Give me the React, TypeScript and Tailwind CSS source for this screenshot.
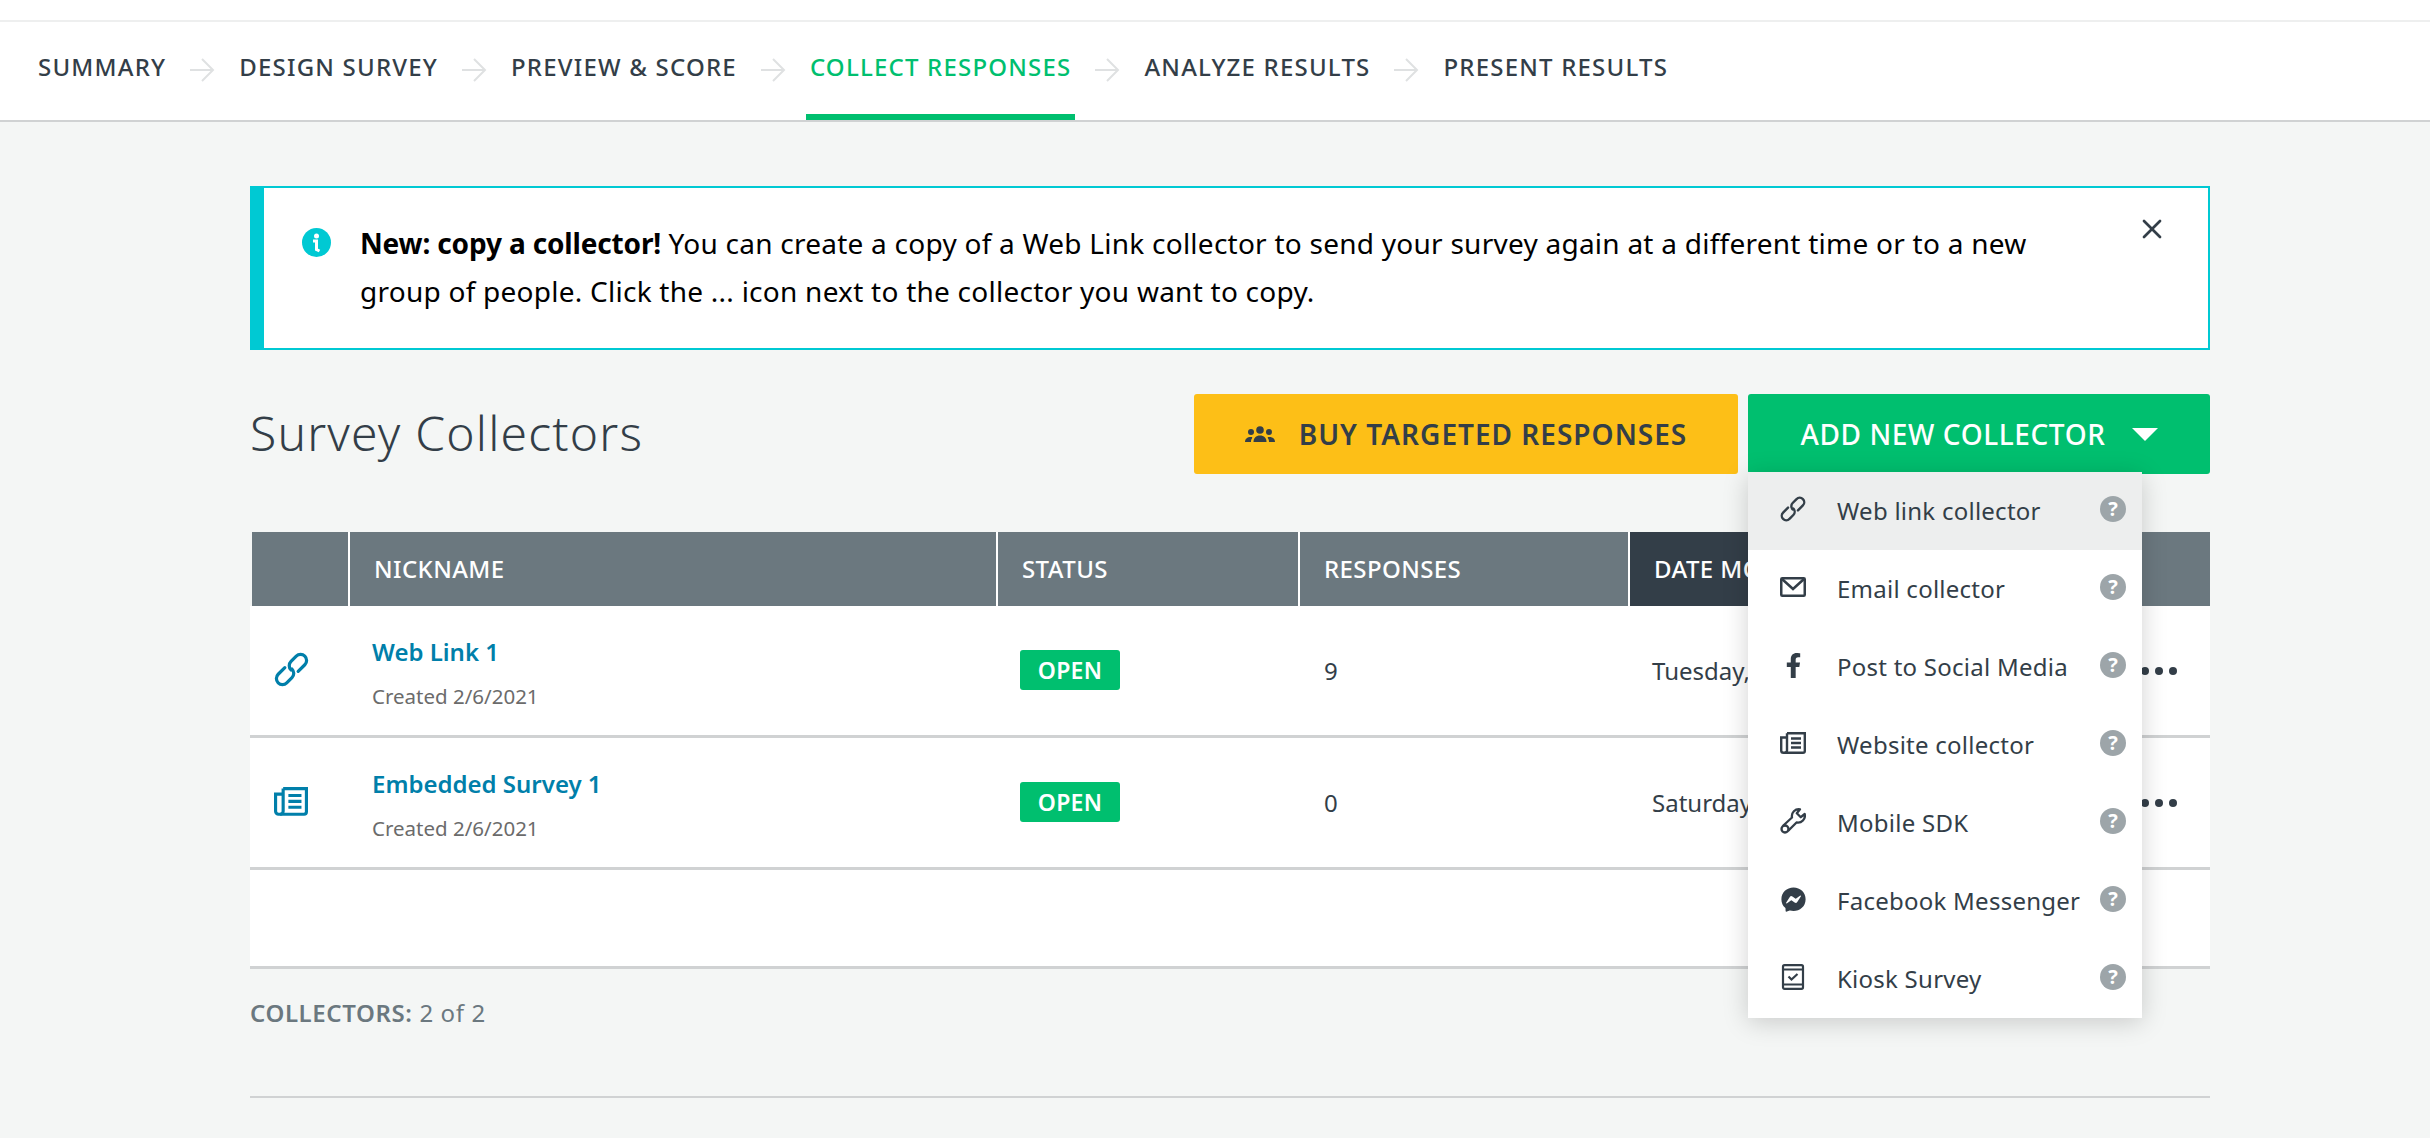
import React from "react";
import { FaFacebookF, FaFacebookMessenger } from "react-icons/fa";
import { X } from "lucide-react";

const steps = [
  { label: "SUMMARY", active: false },
  { label: "DESIGN SURVEY", active: false },
  { label: "PREVIEW & SCORE", active: false },
  { label: "COLLECT RESPONSES", active: true },
  { label: "ANALYZE RESULTS", active: false },
  { label: "PRESENT RESULTS", active: false },
];

const StepArrow = () => (
  <svg width="25" height="24" viewBox="0 0 25 24" fill="none" stroke="#dfe1e2" strokeWidth="2" className="mx-[20px] shrink-0">
    <path d="M0 12h23" />
    <path d="M12 1l11 11-11 11" />
  </svg>
);

const LinkIcon = ({ size = 26 }: { size?: number }) => (
  <svg width={size} height={size} viewBox="0 0 26 26" fill="none" stroke="currentColor" strokeWidth="2.4" strokeLinecap="round">
    <g transform="rotate(-45 13 13)">
      <path d="M10.500 8.500H3.500a4.500 4.500 0 0 0 0 9H9a4.500 4.500 0 0 0 4.500-4.500" />
      <path d="M15.500 17.500h7a4.500 4.500 0 0 0 0-9H17a4.500 4.500 0 0 0-4.500 4.500" />
    </g>
  </svg>
);

const NewsIcon = ({ width = 26 }: { width?: number }) => (
  <svg width={width} height={(width * 22) / 26} viewBox="0 0 26 22" fill="none" stroke="currentColor" strokeWidth="2.4">
    <path d="M7 1.200h17.800V19a1.800 1.800 0 0 1-1.800 1.800H3.500a2.300 2.300 0 0 1-2.300-2.300V5.500H7" />
    <path d="M7 1.200v17.300a2.300 2.300 0 0 1-2.300 2.300" />
    <path d="M11 6.500h10M11 11h10M11 15.500h10" />
  </svg>
);

const WrenchIcon = () => (
  <svg width="26" height="26" viewBox="0 0 26 26" fill="none" stroke="currentColor" strokeWidth="2.300" strokeLinejoin="round">
    <circle cx="5" cy="21" r="3.500" />
    <path d="M2.800 18L12 9.500A7 7 0 0 1 20 1.300L16.800 5.200L20.800 9.200L24.700 6A7 7 0 0 1 16.500 14.500L8 23" />
  </svg>
);

const MailIcon = () => (
  <svg width="26" height="20" viewBox="0 0 26 20" fill="none" stroke="currentColor" strokeWidth="2.500">
    <rect x="1.250" y="1.250" width="23.500" height="17.500" rx="1" />
    <path d="M2 2l11 10L24 2" />
  </svg>
);

const KioskIcon = () => (
  <svg width="24" height="26" viewBox="0 0 24 26" fill="none" stroke="currentColor" strokeWidth="2.200">
    <rect x="2" y="1.200" width="20" height="23.600" rx="1.500" />
    <path d="M2 5.500h20M2 20.500h20" />
    <path d="M7.500 12.500l3 3 6-5.500" />
  </svg>
);

const GroupIcon = () => (
  <svg width="30" height="16" viewBox="0 0 30 16" fill="#333e48">
    <circle cx="15" cy="4" r="3.800" />
    <circle cx="6" cy="6" r="3" />
    <circle cx="24" cy="6" r="3" />
    <path d="M8.500 16c0-4 2.500-6.500 6.500-6.500s6.500 2.500 6.500 6.500z" />
    <path d="M0 16c0-3 2-5 6-5 1.500 0 1.500.5 1 1.500-.8 1-1 2-1 3.500z" />
    <path d="M30 16c0-3-2-5-6-5-1.500 0-1.500.5-1 1.500.8 1 1 2 1 3.500z" />
  </svg>
);

const InfoIcon = () => (
  <svg width="29" height="29" viewBox="0 0 29 29" className="shrink-0 mt-[6px]">
    <circle cx="14.500" cy="14.500" r="14.500" fill="#00c9d3" />
    <circle cx="14.500" cy="8" r="2.500" fill="#fff" />
    <path d="M11 13h3.500v8.500l3 1.500" fill="none" stroke="#fff" strokeWidth="3" />
  </svg>
);

const HelpDot = () => (
  <span className="w-[26px] h-[26px] rounded-full bg-[#9da5a9] text-white text-[20px] font-bold flex items-center justify-center leading-none">
    ?
  </span>
);

const menuItems = [
  { label: "Web link collector", icon: <LinkIcon />, hover: true },
  { label: "Email collector", icon: <MailIcon />, hover: false },
  { label: "Post to Social Media", icon: <FaFacebookF size={25} />, hover: false },
  { label: "Website collector", icon: <NewsIcon />, hover: false },
  { label: "Mobile SDK", icon: <WrenchIcon />, hover: false },
  { label: "Facebook Messenger", icon: <FaFacebookMessenger size={25} />, hover: false },
  { label: "Kiosk Survey", icon: <KioskIcon />, hover: false },
];

const rows = [
  { icon: <LinkIcon size={35} />, name: "Web Link 1", count: "9", date: "Tuesday, February 9, 2021" },
  { icon: <NewsIcon width={34} />, name: "Embedded Survey 1", count: "0", date: "Saturday, February 6, 2021" },
];

const gridCols = "grid grid-cols-[98px_648px_302px_330px_1fr]";

export default function App() {
  return (
    <div className="min-h-[1138px] bg-[#f4f6f5] font-['Noto_Sans',sans-serif] text-[#333e48] overflow-hidden">
      <div className="h-[22px] bg-white border-b-2 border-[#eeefef]" />

      {/* step nav */}
      <nav className="h-[100px] bg-white border-b-2 border-[#d0d2d3] flex pl-[34px]">
        {steps.map((step, i) => (
          <React.Fragment key={step.label}>
            {i > 0 && <div className="flex items-center pb-[2px]"><StepArrow /></div>}
            <div
              className={
                "flex items-center px-[4px] pb-[2px] text-[24px] tracking-[1.2px] font-medium whitespace-nowrap border-b-[6px] " +
                (step.active ? "text-[#00bf6f] border-[#00bf6f]" : "border-transparent")
              }
            >
              {step.label}
            </div>
          </React.Fragment>
        ))}
      </nav>

      <main className="w-[1960px] ml-[250px] pt-[64px]">
        {/* banner */}
        <div className="relative h-[164px] bg-white border-2 border-[#00c9d3] border-l-[14px] flex pl-[38px] pt-[31px]">
          <div className="pt-[3px]"><InfoIcon /></div>
          <p className="ml-[29px] w-[1680px] text-[28px] tracking-[0.25px] leading-[48px] text-black">
            <span className="font-bold tracking-[-0.15px]">New: copy a collector!</span> You can create a copy of a Web Link collector to send your survey again at a different time or to a new group of people. Click the ... icon next to the collector you want to copy.
          </p>
          <X size={32} strokeWidth={2} className="absolute right-[40px] top-[25px]" />
        </div>

        {/* title + actions */}
        <div className="mt-[44px] h-[80px] flex items-center">
          <h1 className="text-[48px] tracking-[1.2px] font-light flex-1 -mt-[3px]">Survey Collectors</h1>
          <button className="w-[544px] h-[80px] rounded-[3px] bg-[#fdbf17] flex items-center justify-center gap-[24px] text-[28px] tracking-[1px] font-semibold">
            <GroupIcon />
            BUY TARGETED RESPONSES
          </button>
          <div className="relative ml-[10px]">
            <button className="w-[462px] h-[80px] rounded-[3px] bg-[#00bf6f] text-white flex items-center justify-center gap-[26px] text-[28px] tracking-[0.6px] font-medium">
              ADD NEW COLLECTOR
              <span className="w-0 h-0 border-x-[13px] border-x-transparent border-t-[13px] border-t-white" />
            </button>
            <div className="absolute z-10 left-0 top-[78px] w-[394px] bg-white shadow-[0_4px_24px_rgba(0,0,0,0.18)]">
              {menuItems.map((item) => (
                <div key={item.label} className={"h-[78px] flex items-center pl-[32px] pr-[16px] " + (item.hover ? "bg-[#edeeee]" : "")}>
                  <span className="w-[26px] flex justify-center shrink-0 -mt-[4px]">{item.icon}</span>
                  <span className="ml-[31px] flex-1 text-[24px] tracking-[0.25px] whitespace-nowrap">{item.label}</span>
                  <span className="-mt-[4px]"><HelpDot /></span>
                </div>
              ))}
            </div>
          </div>
        </div>

        {/* table */}
        <div className="mt-[58px]">
          <div className={gridCols + " h-[74px] pl-[2px] text-white text-[24px] tracking-[0.4px] font-medium"}>
            <div className="bg-[#6b787f] border-r-2 border-white" />
            <div className="bg-[#6b787f] border-r-2 border-white flex items-center pl-[24px]">NICKNAME</div>
            <div className="bg-[#6b787f] border-r-2 border-white flex items-center pl-[24px]">STATUS</div>
            <div className="bg-[#6b787f] border-r-2 border-white flex items-center pl-[24px]">RESPONSES</div>
            <div className="bg-[#333e48] flex items-center pl-[24px] relative">
              DATE MODIFIED
              <div className="absolute left-[118px] right-0 inset-y-0 bg-[#6b787f]" />
            </div>
          </div>
          {rows.map((row) => (
            <div key={row.name} className={gridCols + " h-[132px] bg-white border-b-[3px] border-[#d0d2d3] pl-[2px]"}>
              <div className="pt-[46px] pl-[22px] text-[#007faa]">
                <div className="h-[35px] flex items-center">{row.icon}</div>
              </div>
              <div className="pl-[22px] pt-[28px]">
                <div className="text-[24px] leading-[36px] font-semibold text-[#007faa]">{row.name}</div>
                <div className="text-[20.500px] leading-[28px] mt-[12px] text-[#6b6b6b]">Created 2/6/2021</div>
              </div>
              <div className="pl-[22px] pt-[44px]">
                <span className="inline-flex items-center justify-center w-[100px] h-[40px] rounded-[3px] bg-[#00bf6f] text-white text-[23px] tracking-[0.3px] font-semibold">OPEN</span>
              </div>
              <div className="pl-[24px] pt-[45px] text-[24px] leading-[40px]">{row.count}</div>
              <div className="pl-[22px] pt-[45px] text-[24px] leading-[40px] whitespace-nowrap flex justify-between pr-[33px]">
                <span>{row.date}</span>
                <span className="flex items-center gap-[6px] h-[40px]">
                  <i className="w-[8px] h-[8px] rounded-full bg-[#333e48]" />
                  <i className="w-[8px] h-[8px] rounded-full bg-[#333e48]" />
                  <i className="w-[8px] h-[8px] rounded-full bg-[#333e48]" />
                </span>
              </div>
            </div>
          ))}
          <div className="h-[99px] bg-white border-b-[3px] border-[#d0d2d3]" />
        </div>

        <div className="mt-[27px] text-[24px] tracking-[0.6px] leading-[34px] text-[#6b787f]">
          <span className="font-semibold">COLLECTORS:</span> 2 of 2
        </div>
        <div className="mt-[66px] border-b-2 border-[#d0d2d3]" />
      </main>
    </div>
  );
}
